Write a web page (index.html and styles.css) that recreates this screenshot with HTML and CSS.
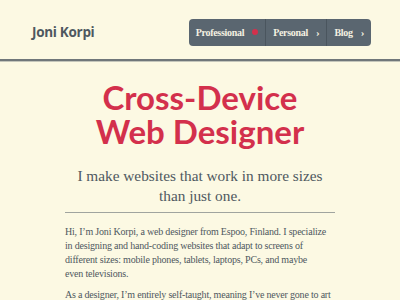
FILE: index.html
```html
<!DOCTYPE html>
<html lang="en">
<head>
  <meta charset="UTF-8">
  <meta name="viewport" content="width=device-width, initial-scale=1.0">
  <link rel="stylesheet" href="styles.css">
</head>
<body>
  <header class="site-header">
    <div class="logo">Joni Korpi</div>
    <nav class="main-nav">
      <a href="#" class="nav-item active">Professional <span class="dot"></span></a>
      <a href="#" class="nav-item">Personal <span class="arrow">&#8250;</span></a>
      <a href="#" class="nav-item">Blog <span class="arrow">&#8250;</span></a>
    </nav>
  </header>

  <main class="content">
    <h1 class="title">Cross-Device<br>Web Designer</h1>
    <p class="lead">I make websites that work in more sizes than just one.</p>
    <hr class="rule">
    <p class="text">Hi, I’m Joni Korpi, a web designer from Espoo, Finland. I specialize in designing and hand-coding websites that adapt to screens of different sizes: mobile phones, tablets, laptops, PCs, and maybe <span class="nowrap">even televisions.</span></p>
    <p class="text">As a designer, I’m entirely self-taught, meaning I’ve never gone to art school or anything like that.</p>
  </main>
</body>
</html>
```

FILE: styles.css
```css
body {
  margin: 0;
  padding: 0;
  background-color: #fcf9e3;
  font-family: 'Liberation Serif', serif;
  color: #4e5860;
}
.site-header {
  display: flex;
  justify-content: space-between;
  align-items: center;
  height: 59px;
  padding: 0 29px 0 32px;
  border-bottom: 2px solid #70777a;
  box-shadow: 0 1px 0 #c4c6bb;
}
.logo {
  font-family: 'Open Sans', sans-serif;
  font-weight: 700;
  font-size: 13.5px;
  color: #4e5860;
  letter-spacing: -0.3px;
  margin-top: 4px;
}
.main-nav {
  display: flex;
  background-color: #5a6670;
  border-radius: 4px;
  height: 27px;
  margin-top: 5px;
}
.nav-item {
  display: flex;
  align-items: center;
  padding: 0 7px;
  color: #f4f1e2;
  text-decoration: none;
  font-size: 10px;
  font-weight: 700;
  letter-spacing: -0.3px;
  border-left: 1px solid #4a555e;
}
.nav-item:first-child {
  border-left: none;
}
.dot {
  display: inline-block;
  width: 6px;
  height: 6px;
  border-radius: 50%;
  background-color: #d3304c;
  margin-left: 8px;
}
.arrow {
  margin-left: 8px;
  font-size: 11px;
  font-weight: 700;
}
.content {
  width: 270px;
  margin: 0 auto;
  padding-top: 19px;
}
.title {
  font-family: 'Lato', sans-serif;
  font-weight: 700;
  font-size: 33px;
  line-height: 34px;
  color: #d3304c;
  text-align: center;
  margin: 0;
}
.lead {
  font-size: 15.3px;
  line-height: 20px;
  text-align: center;
  margin: 18px 0 6px;
}
.rule {
  border: none;
  border-top: 1px solid #a0a49f;
  margin: 0 0 12px;
}
.text {
  font-size: 10px;
  line-height: 14px;
  letter-spacing: -0.2px;
  margin: 0 0 7px;
}
.nowrap {
  white-space: nowrap;
}
```
